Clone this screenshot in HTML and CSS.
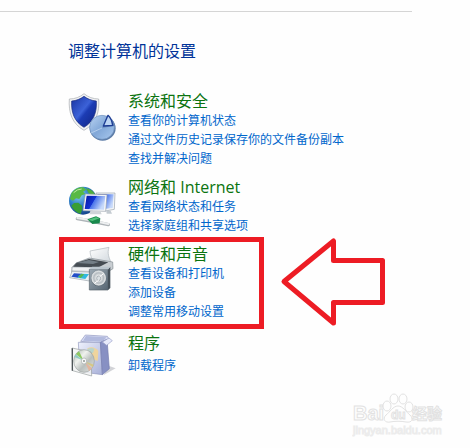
FILE: index.html
```html
<!DOCTYPE html>
<html lang="zh-CN">
  <head>
    <meta charset="UTF-8">
    <title>调整计算机的设置</title>
    <link rel="stylesheet" href="styles.css">
  </head>
  <body>
    <hr class="divider">

    <main class="panel">
      <h1 class="heading">调整计算机的设置</h1>

      <section class="category">
        <svg class="icon" viewBox="24 21 144 150" aria-hidden="true">
          <defs>
            <linearGradient id="shield" x1="0" y1="0" x2="1" y2="1">
              <stop offset="0" stop-color="#1732a0"/>
              <stop offset="0.45" stop-color="#3c62d8"/>
              <stop offset="0.55" stop-color="#1c3cb4"/>
              <stop offset="1" stop-color="#102480"/>
            </linearGradient>
            <linearGradient id="pie" x1="0" y1="0" x2="1" y2="1">
              <stop offset="0" stop-color="#b9d3f2"/>
              <stop offset="0.5" stop-color="#82a8d8"/>
              <stop offset="1" stop-color="#a9c9ee"/>
            </linearGradient>
          </defs>
          <path d="M72 26C60 36 45 42 28 42C25 82 36 116 72 136C108 116 119 82 116 42C99 42 84 36 72 26Z" fill="#f2f3f4" stroke="#a5a9ae" stroke-width="2"/>
          <path d="M72 34C61 42 49 47 35 48C33 82 43 110 72 127C101 110 111 82 109 48C95 47 83 42 72 34Z" fill="url(#shield)" stroke="#15277a" stroke-width="2"/>
          <ellipse cx="128" cy="130" rx="39" ry="37" fill="#5b7ba6"/>
          <ellipse cx="126" cy="127" rx="37" ry="36" fill="url(#pie)" stroke="#6f91bd" stroke-width="2"/>
          <path d="M126 129L93 144" stroke="#c9def5" stroke-width="2"/>
          <path d="M127 128L141 94C154 98 163 109 164 123Z" fill="#6383b5"/>
          <path d="M130 123L144 91C151 97 156 109 158 121Z" fill="#bdd5f3" stroke="#1e3d94" stroke-width="4" stroke-linejoin="round"/>
        </svg>
        <div class="links">
          <h2 class="title"><a href="#">系统和安全</a></h2>
          <a class="task" href="#">查看你的计算机状态</a>
          <a class="task" href="#">通过文件历史记录保存你的文件备份副本</a>
          <a class="task" href="#">查找并解决问题</a>
        </div>
      </section>

      <section class="category">
        <svg class="icon" viewBox="24 9 144 150" aria-hidden="true">
          <defs>
            <radialGradient id="globe" cx="0.35" cy="0.3" r="0.75">
              <stop offset="0" stop-color="#8ad0f4"/>
              <stop offset="0.5" stop-color="#2f80c8"/>
              <stop offset="1" stop-color="#123f86"/>
            </radialGradient>
            <linearGradient id="screen" x1="0" y1="0" x2="1" y2="0.4">
              <stop offset="0" stop-color="#0614a0"/>
              <stop offset="0.5" stop-color="#1434d4"/>
              <stop offset="0.53" stop-color="#4a74ea"/>
              <stop offset="1" stop-color="#c8dafa"/>
            </linearGradient>
          </defs>
          <circle cx="69" cy="77" r="42" fill="url(#globe)"/>
          <path d="M34 55C42 43 56 35 70 37L79 44L69 50L76 57L65 61L58 72L48 70L39 77L30 72Z" fill="#58b944"/>
          <path d="M78 39C92 43 101 49 106 60L91 60L84 52Z" fill="#4fae3c"/>
          <path d="M42 84L55 83L66 92L67 103L62 117C49 113 39 103 34 92Z" fill="#399e34"/>
          <path d="M41 53Q52 42 65 42" fill="none" stroke="#bfe9a7" stroke-width="3"/>
          <path d="M108 54L165 54L163 103L136 108Z" fill="#f4f6f7" stroke="#98a2ac" stroke-width="2"/>
          <path d="M112 58L161 58L158 99L132 102Z" fill="url(#screen)"/>
          <path d="M76 57L141 59L137 109L69 107Z" fill="#f8f9fa" stroke="#98a2ac" stroke-width="2"/>
          <path d="M80 62L136 63L132 104L74 102Z" fill="url(#screen)"/>
          <path d="M91 108H121L125 118H88Z" fill="#cfd4d8"/>
          <path d="M139 108L152 107L156 116H140Z" fill="#c4cbd1"/>
          <path d="M52 131L93 138L145 149" fill="none" stroke="#aeb4b8" stroke-width="10" stroke-linecap="round"/>
          <path d="M52 129L93 136L145 147" fill="none" stroke="#eceeef" stroke-width="6" stroke-linecap="round"/>
          <path d="M82 133L108 124L121 130L119 145L97 147Z" fill="#19894c"/>
          <path d="M84 134L108 127L118 130L97 138Z" fill="#54c47e"/>
        </svg>
        <div class="links">
          <h2 class="title"><a href="#">网络和 Internet</a></h2>
          <a class="task" href="#">查看网络状态和任务</a>
          <a class="task" href="#">选择家庭组和共享选项</a>
        </div>
      </section>

      <section class="category">
        <svg class="icon" viewBox="24 15 144 150" aria-hidden="true">
          <defs>
            <linearGradient id="paper" x1="0" y1="0" x2="1" y2="1">
              <stop offset="0" stop-color="#ffffff"/>
              <stop offset="1" stop-color="#cfd6dc"/>
            </linearGradient>
            <linearGradient id="speaker" x1="0" y1="0" x2="1" y2="1">
              <stop offset="0" stop-color="#9daab4"/>
              <stop offset="1" stop-color="#566572"/>
            </linearGradient>
            <radialGradient id="cone">
              <stop offset="0" stop-color="#8f979c"/>
              <stop offset="0.25" stop-color="#f5f6f6"/>
              <stop offset="0.7" stop-color="#b4bbc0"/>
              <stop offset="1" stop-color="#e9ecee"/>
            </radialGradient>
          </defs>
          <path d="M90 33L147 22C141 39 147 54 153 66L104 72C96 57 90 46 90 33Z" fill="url(#paper)" stroke="#adb5bb" stroke-width="2"/>
          <path d="M48 69L88 54L158 66L159 86L123 108L35 97L36 82Z" fill="#c9ced2" stroke="#838c93" stroke-width="2"/>
          <path d="M50 68L87 57L145 67L116 82L39 80Z" fill="#454c52"/>
          <path d="M50 69L86 60L117 66L99 72Z" fill="#737e86"/>
          <path d="M38 83L118 84L116 94L37 91Z" fill="#f0f2f3"/>
          <path d="M36 94L103 97L88 123L29 113Z" fill="#edf1f3" stroke="#9ba5ac" stroke-width="2"/>
          <path d="M42 100L66 101L54 113L34 110Z" fill="#254fc8"/>
          <path d="M64 101L87 102L76 117L52 113Z" fill="#31b8df"/>
          <path d="M54 109L65 101L73 103L62 115Z" fill="#57b851"/>
          <path d="M88 88H144V150H88Z" fill="url(#speaker)" stroke="#56616a" stroke-width="2"/>
          <path d="M144 88L151 80V144L144 150Z" fill="#46515a"/>
          <path d="M88 88L96 80H151L144 88Z" fill="#bac5cd"/>
          <ellipse cx="116" cy="115" rx="23" ry="24" fill="#53606a"/>
          <ellipse cx="116" cy="114" rx="21" ry="22" fill="url(#cone)" stroke="#e8ebed" stroke-width="2"/>
          <ellipse cx="116" cy="115" rx="6" ry="7" fill="#dce1e4" stroke="#8c969d" stroke-width="2"/>
          <path d="M116 121L104 129M119 110L131 101" stroke="#ffffff" stroke-width="3"/>
        </svg>
        <div class="links">
          <h2 class="title"><a href="#">硬件和声音</a></h2>
          <a class="task" href="#">查看设备和打印机</a>
          <a class="task" href="#">添加设备</a>
          <a class="task" href="#">调整常用移动设置</a>
        </div>
        <div class="highlight"></div>
        <svg class="arrow" viewBox="0 0 108 92" aria-hidden="true">
          <path d="M8 44.500L57.500 4V23.500H106.500V65.500H57.500V86Z" fill="none" stroke="#ed1c24" stroke-width="5" stroke-linejoin="round"/>
        </svg>
      </section>

      <section class="category programs">
        <svg class="icon" viewBox="24 27 144 150" aria-hidden="true">
          <defs>
            <linearGradient id="box" x1="0" y1="0" x2="1" y2="1">
              <stop offset="0" stop-color="#edf0fc"/>
              <stop offset="1" stop-color="#a8b0d8"/>
            </linearGradient>
            <linearGradient id="disc" x1="0" y1="0" x2="1" y2="1">
              <stop offset="0" stop-color="#a3b2a8"/>
              <stop offset="0.35" stop-color="#f0f2ee"/>
              <stop offset="0.6" stop-color="#b9bfbd"/>
              <stop offset="1" stop-color="#e4e6e4"/>
            </linearGradient>
          </defs>
          <path d="M130 151L167 130L148 123Z" fill="#d2d3d7"/>
          <path d="M62 49L76 30L142 34L149 45L129 55Z" fill="#d9def5" stroke="#8f96be" stroke-width="2"/>
          <path d="M78 33L139 37L128 50L69 47Z" fill="#b2bade"/>
          <path d="M55 52L121 52L127 149L60 140Z" fill="url(#box)" stroke="#9299be" stroke-width="2"/>
          <path d="M121 52L141 43L148 131L127 149Z" fill="#8790c3" stroke="#747cae" stroke-width="2"/>
          <path d="M127 51L147 39L157 47L140 61Z" fill="#e7eafb" stroke="#9ba2c8" stroke-width="2"/>
          <path d="M82 70Q101 61 115 78L113 108L91 100Z" fill="#efd49d"/>
          <path d="M82 73Q94 65 103 72L99 84L84 83Z" fill="#b9d5cb"/>
          <path d="M36 69L93 81L95 153L38 137Z" fill="#f3f4f4" fill-opacity="0.85" stroke="#959b9c" stroke-width="2"/>
          <path d="M37 70V137" stroke="#4d5557" stroke-width="4"/>
          <ellipse cx="72" cy="108" rx="31" ry="34" fill="url(#disc)" stroke="#9da3a2" stroke-width="2"/>
          <path d="M71 107L48 87L57 79Z" fill="#8cc960"/>
          <path d="M72 107L43 96L46 88Z" fill="#91cbc4"/>
          <path d="M75 112L96 130L87 138Z" fill="#e3b59e"/>
          <path d="M74 109L101 119L98 127Z" fill="#d7c783"/>
          <ellipse cx="72" cy="108" rx="8" ry="9" fill="#f9faf9" stroke="#a9afad" stroke-width="2"/>
          <ellipse cx="72" cy="108" rx="3" ry="3" fill="#8f9692"/>
        </svg>
        <div class="links">
          <h2 class="title"><a href="#">程序</a></h2>
          <a class="task" href="#">卸载程序</a>
        </div>
      </section>
    </main>

    <svg class="watermark" viewBox="0 0 96 46" role="img" aria-label="Baidu 经验">
      <g class="logo">
        <text class="brand" x="1" y="28">Bai</text>
        <ellipse cx="35" cy="14" rx="4" ry="5"/>
        <ellipse cx="42" cy="7" rx="4" ry="5"/>
        <ellipse cx="51" cy="7" rx="4" ry="5"/>
        <ellipse cx="57" cy="15" rx="4" ry="5"/>
        <path d="M46 14C41 14 38 20 34 23C30 27 33 31 38 30C43 29 49 29 54 30C60 31 62 27 58 23C54 20 51 14 46 14Z"/>
        <text class="du" x="39" y="27">du</text>
        <text class="cn" x="60" y="27">经验</text>
        <text class="site" x="1" y="42">jingyan.baidu.com</text>
      </g>
    </svg>
  </body>
</html>
```

FILE: styles.css
```css
body {
  position: relative;
  box-sizing: border-box;
  min-height: 100vh;
  margin: 0;
  padding-top: 11px;
  background-color: #fefefe;
  font-family: "Open Sans", "Noto Sans CJK SC", sans-serif;
  font-size: 12px;
  line-height: 19px;
}

a {
  color: inherit;
  text-decoration: none;
}

a:hover {
  text-decoration: underline;
}

.divider {
  height: 1px;
  margin: 0 58px 0 0;
  border: 0;
  background-color: #d5d5d5;
}

.panel {
  display: flex;
  flex-direction: column;
  gap: 10px;
  padding: 28px 24px 0 68px;
}

.heading {
  margin: 0 0 20px;
  color: #003399;
  font-size: 16px;
  font-weight: normal;
  line-height: 22px;
}

.category {
  position: relative;
  display: flex;
  align-items: flex-start;
  gap: 12px;
}

.icon {
  flex: none;
  width: 48px;
  height: 50px;
  overflow: visible;
}

.links {
  display: flex;
  flex-direction: column;
  align-items: flex-start;
}

.title {
  margin: 0;
  color: #0b7410;
  font-size: 16px;
  font-weight: normal;
  line-height: 19px;
}

.task {
  color: #0066cc;
}

.programs {
  margin-top: 3px;
}

.programs .title {
  margin-bottom: 3px;
}

/* red frame and arrow drawn over the hardware category */
.highlight {
  position: absolute;
  top: -8px;
  bottom: -8px;
  left: -9px;
  box-sizing: border-box;
  width: 205px;
  border: 5px solid #ed1c24;
}

.arrow {
  position: absolute;
  top: -8px;
  left: 208px;
  width: 108px;
  height: 92px;
  overflow: visible;
}

.watermark {
  position: absolute;
  right: 22px;
  bottom: 10px;
  width: 96px;
  height: 46px;
}

.logo {
  fill: #fefefe;
  stroke: #e2e2e2;
  stroke-width: 1px;
}

.brand {
  font: bold 20px "Liberation Sans", sans-serif;
}

.du {
  font: bold 12px "Liberation Sans", sans-serif;
}

.cn {
  font: bold 15px "Noto Sans CJK SC", sans-serif;
}

.site {
  font: 11px "Liberation Sans", sans-serif;
  stroke: #ececec;
}
```
